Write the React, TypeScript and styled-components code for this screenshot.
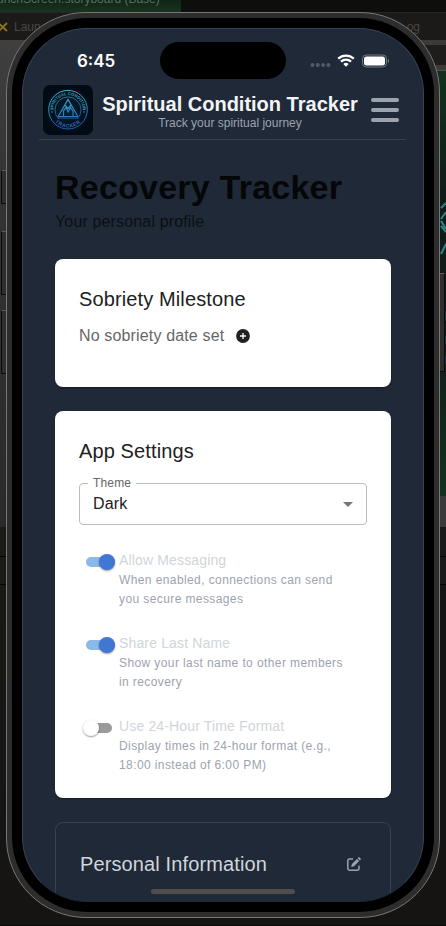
import React from 'react';
import styled, { createGlobalStyle } from 'styled-components';

const Global = createGlobalStyle`
  * { box-sizing: border-box; }
  html, body { margin: 0; padding: 0; background: #151412; }
  body { font-family: "Liberation Sans", Arial, Helvetica, sans-serif; overflow: hidden; }
`;

/* ---------- desktop behind the device ---------- */

const Desktop = styled.div`
  display: grid;
  width: 446px;
  height: 926px;
  overflow: hidden;
  > * { grid-area: 1 / 1; }
`;

const Backdrop = styled.div`
  display: grid;
  grid-template-rows: 13px 27px 1fr 1px;
  width: 446px;
  height: 926px;
  overflow: hidden;
  background: #151413;
`;

const EditorTop = styled.div`
  display: flex;
  overflow: hidden;
  background: #0e0e0d;
  border-bottom: 1px solid #272624;
  height: 13px;
`;

const ActiveTab = styled.div`
  width: 181px;
  height: 12px;
  background: linear-gradient(#102516, #18351f);
  color: #5b6d5f;
  font-size: 12px;
  line-height: 13px;
  white-space: nowrap;
  span { display: block; margin: -7px 0 0 -3px; }
`;

const FileBar = styled.div`
  display: flex;
  align-items: center;
  justify-content: space-between;
  background: #1c1a18;
  color: #484644;
  font-size: 12px;
  padding: 0 26px 0 0;
  svg { margin-right: 6px; }
`;

const FileName = styled.span`
  display: flex;
  align-items: center;
`;

const Sides = styled.div`
  display: flex;
  justify-content: space-between;
`;

const SideStrip = styled.div`
  display: flex;
  flex-direction: column;
  width: 120px;
`;

const Patch = styled.div<{ $h: number; $bg: string; $line?: string }>`
  height: ${(p) => p.$h}px;
  flex: none;
  background: ${(p) => p.$bg};
  border-bottom: ${(p) => (p.$line ? `1px solid ${p.$line}` : '0')};
  svg { display: block; margin-left: auto; }
`;

const Bottom = styled.div`
  background: #0a0909;
`;

/* ---------- device ---------- */

const Device = styled.div`
  display: grid;
  grid-template-columns: 6px 434px 6px;
  align-items: start;
  height: 926px;
  padding-top: 12px;
`;

const ButtonRail = styled.div`
  display: flex;
  flex-direction: column;
`;

const SideButton = styled.i<{ $top: number; $h: number; $right?: boolean }>`
  width: 5px;
  height: ${(p) => p.$h}px;
  margin-top: ${(p) => p.$top}px;
  margin-left: ${(p) => (p.$right ? 0 : 1)}px;
  background: #2f2e2d;
  border: 1px solid #0b0b0b;
  border-top-color: #5a5958;
  ${(p) => (p.$right ? 'border-left: 0;' : 'border-right: 0;')}
`;

const Frame = styled.div`
  width: 434px;
  height: 906px;
  padding: 5px;
  background: #2e2d2d;
  border: 1px solid #777676;
  border-radius: 80px;
`;

const Bezel = styled.div`
  height: 894px;
  padding: 10px;
  background: #000;
  border-radius: 75px;
`;

const Screen = styled.div`
  display: flex;
  flex-direction: column;
  position: relative;
  width: 402px;
  height: 874px;
  overflow: hidden;
  background: #1f2937;
  border: 1px solid #374357;
  border-bottom-color: #1f2937;
  border-radius: 65px;
`;

const StatusBar = styled.div`
  display: grid;
  grid-template-columns: 137px 126px 1fr;
  height: 54px;
  padding-top: 13px;
  flex: none;
`;

const Clock = styled.div`
  padding-left: 54px;
  font: 600 17px/38px Inter, "Liberation Sans", sans-serif;
  color: #fff;
`;

const Island = styled.div`
  height: 37px;
  border-radius: 19px;
  background: #000;
`;

const Indicators = styled.div`
  display: flex;
  align-items: flex-start;
  padding: 11px 0 0 22.5px;
`;

const Header = styled.header`
  display: flex;
  align-items: center;
  height: 57px;
  margin: 0 17px 0 16px;
  padding: 2px 6px 4px 4px;
  border-bottom: 1px solid #374151;
  flex: none;
`;

const Titles = styled.div`
  width: 264px;
  margin: 5px 0 0 5px;
  text-align: center;
  white-space: nowrap;
`;

const AppName = styled.h1`
  margin: 0;
  font-size: 20px;
  line-height: 21px;
  font-weight: 700;
  color: #f3f4f6;
`;

const Tagline = styled.p`
  margin: 0;
  font-size: 12px;
  line-height: 16px;
  color: #9ca3af;
`;

const MenuButton = styled.button`
  display: flex;
  flex-direction: column;
  gap: 6px;
  margin: 0 0 0 9px;
  padding: 0;
  border: 0;
  background: none;
  i { width: 28px; height: 4px; border-radius: 2px; background: #9ca3af; }
`;

const Content = styled.main`
  padding: 30px 32px 0;
`;

const PageTitle = styled.h2`
  margin: 0;
  font-size: 34px;
  line-height: 34px;
  font-weight: 700;
  letter-spacing: 0.23px;
  color: #050608;
  white-space: nowrap;
`;

const PageLead = styled.p`
  margin: 8px 0 27px;
  font-size: 16px;
  line-height: 20px;
  letter-spacing: 0.15px;
  color: #0c1015;
`;

const Card = styled.section<{ $h: number }>`
  height: ${(p) => p.$h}px;
  margin-bottom: 24px;
  padding: 24px;
  background: #fff;
  border-radius: 8px;
  box-shadow: 0 1px 2px rgba(0, 0, 0, 0.35);
`;

const CardTitle = styled.h3`
  margin: 0;
  font-size: 20px;
  line-height: 32px;
  font-weight: 400;
  letter-spacing: 0.12px;
  color: #212121;
`;

const SobrietyRow = styled.div`
  display: flex;
  align-items: center;
  gap: 12px;
  margin-top: 9px;
  height: 24px;
  font-size: 16px;
  letter-spacing: 0.15px;
  color: #666;
`;

const Select = styled.fieldset`
  display: flex;
  align-items: center;
  justify-content: space-between;
  height: 49px;
  margin: 9px 0 0;
  padding: 0 13px 6px;
  border: 1px solid #bdbdbd;
  border-radius: 4px;
  font-size: 16px;
  letter-spacing: 0.15px;
  color: #212121;
  legend {
    margin-left: -5px;
    padding: 0 5px;
    height: 14px;
    font-size: 12px;
    line-height: 14px;
    letter-spacing: 0.15px;
    color: #666;
  }
`;

const Caret = styled.i`
  border: 5px solid transparent;
  border-top-color: #757575;
  border-bottom: 0;
`;

const Options = styled.div`
  display: flex;
  flex-direction: column;
  gap: 26px;
  margin-top: 26px;
`;

const Option = styled.div`
  display: flex;
  height: 57px;
`;

const Toggle = styled.div<{ $on?: boolean }>`
  display: flex;
  align-items: center;
  width: ${(p) => (p.$on ? 29 : 26)}px;
  height: 10px;
  margin: 5.5px ${(p) => (p.$on ? 4 : 7)}px 0 7px;
  border-radius: 5px;
  background: ${(p) => (p.$on ? '#8bb9e8' : '#9b9b9b')};
  i {
    width: 16px;
    height: 16px;
    flex: none;
    margin-left: ${(p) => (p.$on ? 13 : -3)}px;
    border-radius: 50%;
    background: ${(p) => (p.$on ? '#3f77d3' : '#fff')};
    box-shadow: 0 1px 2px rgba(0, 0, 0, 0.4);
  }
`;

const OptionName = styled.div`
  font-size: 14px;
  line-height: 19px;
  letter-spacing: 0.15px;
  color: #d1d5db;
`;

const OptionHint = styled.div`
  margin-top: 1px;
  font-size: 12px;
  line-height: 19px;
  letter-spacing: 0.4px;
  color: #9ca3af;
  white-space: pre-line;
`;

const PersonalCard = styled.section`
  display: flex;
  align-items: center;
  justify-content: space-between;
  height: 120px;
  padding: 0 29px 36px 24px;
  border: 1px solid #374151;
  border-radius: 8px;
  ${CardTitle} { color: #d1d5db; }
`;

const HomeBar = styled.div`
  position: absolute;
  left: 128px;
  bottom: 7px;
  width: 144px;
  height: 5px;
  border-radius: 3px;
  background: #504e4c;
`;

const Emblem = () => (
  <svg width="50" height="50" viewBox="0 0 50 50">
    <defs>
      <linearGradient id="neon" gradientUnits="userSpaceOnUse" x1="20" y1="5" x2="30" y2="45">
        <stop offset="0" stopColor="#43b6c8" />
        <stop offset="1" stopColor="#2355b5" />
      </linearGradient>
      <radialGradient id="night">
        <stop offset="0" stopColor="#042033" />
        <stop offset="1" stopColor="#020a13" />
      </radialGradient>
      <path id="arcTop" d="M11.300 30.500a14.800 14.800 0 1 1 27.400 0" />
      <path id="arcBottom" d="M7.500 25a17.500 17.500 0 0 0 35 0" />
    </defs>
    <rect width="50" height="50" rx="7" fill="url(#night)" />
    <g fill="none" stroke="url(#neon)">
      <circle cx="25" cy="24.700" r="19.300" strokeWidth="1" />
      <path d="M15.700 34a13 13 0 1 1 18.600 0" strokeWidth="0.7" />
      <path d="M15.200 31.500 25 14.500l9.800 17zM20.500 31v-5l2.500-3.500 2.200 4.500 2.300-4.500 2.500 4V31M22 20l3 3.500 3-3.500" strokeWidth="1.200" />
      <path d="M15 33h20" strokeWidth="0.8" />
    </g>
    <g fill="#3fa6c2" fontFamily="Liberation Sans" fontWeight="700" fontSize="4.200">
      <text><textPath href="#arcTop" startOffset="50%" textAnchor="middle">SPIRITUAL CONDITION</textPath></text>
      <text fill="#2d6fbd" fontSize="5" letterSpacing="0.6"><textPath href="#arcBottom" startOffset="50%" textAnchor="middle">TRACKER</textPath></text>
      <circle cx="9" cy="27" r="0.7" /><circle cx="41" cy="27" r="0.7" />
    </g>
  </svg>
);

const options = [
  { name: 'Allow Messaging', hint: 'When enabled, connections can send\nyou secure messages', on: true },
  { name: 'Share Last Name', hint: 'Show your last name to other members\nin recovery', on: true },
  { name: 'Use 24-Hour Time Format', hint: 'Display times in 24-hour format (e.g.,\n18:00 instead of 6:00 PM)', on: false },
];

export default function App() {
  return (
    <Desktop>
      <Global />
      <Backdrop>
        <EditorTop><ActiveTab><span>unchScreen.storyboard (Base)</span></ActiveTab></EditorTop>
        <FileBar>
          <FileName>
            <svg width="8" height="12" viewBox="0 0 8 12" stroke="#8d7420" strokeWidth="1.800"><path d="M-2 1.500 7 10M7 2-1 10" /></svg>
            Laun
          </FileName>
          <span>og</span>
        </FileBar>
        <Sides>
          <SideStrip>
            <Patch $h={487} $bg="linear-gradient(#3f3f3f, #343434 30%, #2a2a2a)" />
            <Patch $h={30} $bg="#1b1a17" $line="#050505" />
            <Patch $h={28} $bg="#1b1a17" $line="#050505" />
            <Patch $h={340} $bg="linear-gradient(#191815, #151413)" />
          </SideStrip>
          <SideStrip>
            <Patch $h={5} $bg="#3b3a39" />
            <Patch $h={20} $bg="#1e1d1c" />
            <Patch $h={6} $bg="#3b3a39" $line="#386140" />
            <Patch $h={425} $bg="linear-gradient(#14301d, #0f1c18 30%, #101f1b 65%, #15301c)">
              <svg width="6" height="310" viewBox="0 0 6 310" fill="none" stroke="#2f8585" strokeWidth="2">
                <path d="M1 137 6 132M1 148l5-7M1 150l5 8M1 155l5 6M1 183l5-10" />
                <path d="M6 240v10M6 265v8M6 285v8" stroke="#1d4961" strokeWidth="1" />
              </svg>
            </Patch>
            <Patch $h={31} $bg="#3b3a39" />
            <Patch $h={30} $bg="#1a1917" $line="#050505" />
            <Patch $h={28} $bg="#1a1917" $line="#050505" />
            <Patch $h={340} $bg="linear-gradient(#151412, #151413)" />
          </SideStrip>
        </Sides>
        <Bottom />
      </Backdrop>
      <Device>
        <ButtonRail>
          <SideButton $top={158} $h={34} />
          <SideButton $top={27} $h={64} />
          <SideButton $top={15} $h={64} />
        </ButtonRail>
        <Frame>
          <Bezel>
            <Screen>
              <StatusBar>
                <Clock>6:45</Clock>
                <Island />
                <Indicators>
                  <svg width="80" height="16" viewBox="0 0 80 16">
                    <g fill="#525a66">
                      <circle cx="3.500" cy="12" r="2" /><circle cx="8.800" cy="12" r="2" /><circle cx="14.100" cy="12" r="2" /><circle cx="19.400" cy="12" r="2" />
                    </g>
                    <g fill="none" stroke="#fff" strokeWidth="2.300">
                      <path d="M29.200 5.700a11.500 11.500 0 0 1 15.600 0" />
                      <path d="M32 8.700a7.300 7.300 0 0 1 10 0" />
                    </g>
                    <path d="M34.300 10.900a4 4 0 0 1 5.400 0L37 13.800z" fill="#fff" />
                    <rect x="53.500" y="2" width="24" height="12" rx="3.800" fill="none" stroke="#747b85" />
                    <rect x="55" y="3.500" width="21" height="9" rx="2.500" fill="#fff" />
                    <path d="M78.800 6a2.200 2.200 0 0 1 0 4z" fill="#747b85" />
                  </svg>
                </Indicators>
              </StatusBar>
              <Header>
                <Emblem />
                <Titles>
                  <AppName>Spiritual Condition Tracker</AppName>
                  <Tagline>Track your spiritual journey</Tagline>
                </Titles>
                <MenuButton aria-label="Menu"><i /><i /><i /></MenuButton>
              </Header>
              <Content>
                <PageTitle>Recovery Tracker</PageTitle>
                <PageLead>Your personal profile</PageLead>
                <Card $h={128}>
                  <CardTitle>Sobriety Milestone</CardTitle>
                  <SobrietyRow>
                    No sobriety date set
                    <svg width="14" height="14" viewBox="0 0 14 14">
                      <circle cx="7" cy="7" r="6.900" fill="#212121" />
                      <path d="M4 7h6M7 4v6" stroke="#fff" strokeWidth="1.300" />
                    </svg>
                  </SobrietyRow>
                </Card>
                <Card $h={387}>
                  <CardTitle>App Settings</CardTitle>
                  <Select>
                    <legend>Theme</legend>
                    <span>Dark</span>
                    <Caret />
                  </Select>
                  <Options>
                    {options.map((o) => (
                      <Option key={o.name}>
                        <Toggle $on={o.on}><i /></Toggle>
                        <div>
                          <OptionName>{o.name}</OptionName>
                          <OptionHint>{o.hint}</OptionHint>
                        </div>
                      </Option>
                    ))}
                  </Options>
                </Card>
                <PersonalCard>
                  <CardTitle>Personal Information</CardTitle>
                  <svg width="14" height="14" viewBox="0 0 14 14" fill="none" stroke="#9ca3af" strokeWidth="1.500">
                    <path d="M6 2H2.700A2 2 0 0 0 .8 4v7.200a2 2 0 0 0 2 2H10a2 2 0 0 0 2-2V8.500" />
                    <path d="M4.200 9.900 4.900 7 10 1.900l2.200 2.200L7.100 9.200z" fill="#9ca3af" stroke="none" />
                    <path d="m10.700 1.200 2.200 2.200.6-.6a1.300 1.300 0 0 0 0-1.500l-.8-.8a1.200 1.200 0 0 0-1.500 0z" fill="#9ca3af" stroke="none" />
                  </svg>
                </PersonalCard>
              </Content>
              <HomeBar />
            </Screen>
          </Bezel>
        </Frame>
        <ButtonRail>
          <SideButton $right $top={261} $h={99} />
        </ButtonRail>
      </Device>
    </Desktop>
  );
}
